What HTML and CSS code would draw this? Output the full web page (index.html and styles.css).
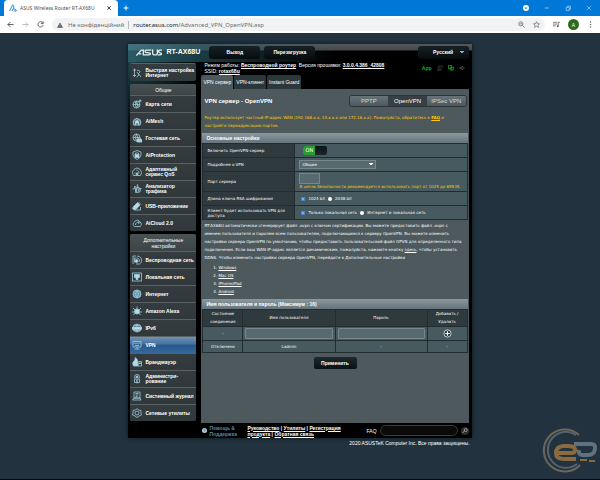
FILE: index.html
```html
<!DOCTYPE html>
<html lang="ru">
<head>
  <meta charset="UTF-8" />
  <meta name="viewport" content="width=device-width, initial-scale=1.0"/>
  <title>ASUS Wireless Router RT-AX68U</title>
  <link rel="stylesheet" href="styles.css">
</head>
<body>
  <header class="browser">
    <div class="tab-strip">
      <div class="browser-tab">
        <svg class="favicon" viewBox="0 0 16 16"><path d="M1 14L7.500 1.500L10 6L6 14M9 10H12L15 14H10" fill="none" stroke="#2490dc" stroke-width="2"/></svg>
        <span class="tab-name">ASUS Wireless Router RT-AX68U</span>
        <button class="plain-btn" aria-label="Close tab"><svg viewBox="0 0 10 10"><path d="M2 2L8 8M8 2L2 8" stroke="#444" stroke-width="1.600"/></svg></button>
      </div>
      <button class="plain-btn new-tab" aria-label="New tab"><svg viewBox="0 0 10 10"><path d="M5 1V9M1 5H9" stroke="#fff" stroke-width="1.600"/></svg></button>
      <div class="window-btns">
        <button class="plain-btn" aria-label="Account"><svg viewBox="0 0 10 10"><circle cx="5" cy="5" r="5" fill="#fff"/><path d="M2.500 4H7.500L5 7Z" fill="#0078d7"/></svg></button>
        <button class="plain-btn" aria-label="Minimize"><svg viewBox="0 0 10 10"><path d="M1 5H8" stroke="#cfe6fa"/></svg></button>
        <button class="plain-btn" aria-label="Restore"><svg viewBox="0 0 10 10"><path d="M2 4H7V9H2ZM4 4V2H9V7H7" fill="none" stroke="#cfe6fa"/></svg></button>
        <button class="plain-btn" aria-label="Close"><svg viewBox="0 0 10 10"><path d="M2 2L8 8M8 2L2 8" stroke="#cfe6fa"/></svg></button>
      </div>
    </div>
    <div class="toolbar">
      <button class="plain-btn" aria-label="Back"><svg viewBox="0 0 16 16"><path d="M15 8H2M8 2L2 8L8 14" fill="none" stroke="#4a4d51" stroke-width="2"/></svg></button>
      <button class="plain-btn" aria-label="Forward"><svg viewBox="0 0 16 16"><path d="M1 8H14M8 2L14 8L8 14" fill="none" stroke="#b5b8bb" stroke-width="2"/></svg></button>
      <button class="plain-btn" aria-label="Reload"><svg viewBox="0 0 16 16"><path d="M13 4A6 6 0 1 0 14 9.500M14 1V6H9" fill="none" stroke="#4a4d51" stroke-width="2"/></svg></button>
      <div class="address">
        <svg class="warn" viewBox="0 0 16 16"><path d="M8 1L16 15H0Z" fill="#54575b"/><path d="M8 6V10M8 11.500V13.500" stroke="#f1f3f4" stroke-width="1.500"/></svg>
        <span class="insecure">Не конфіденційний</span>
        <span class="url"><b>router.asus.com</b>/Advanced_VPN_OpenVPN.asp</span>
        <svg class="addr-icon" viewBox="0 0 16 16"><g fill="none" stroke="#5f6368" stroke-width="1.700"><circle cx="6.500" cy="6.500" r="4.700"/><path d="M10 10L15 15M4 6.500H9"/></g></svg>
        <svg class="addr-icon" viewBox="0 0 16 16"><path d="M8 1.500L10 6L15 6.500L11.200 9.700L12.400 14.500L8 12L3.600 14.500L4.800 9.700L1 6.500L6 6Z" fill="none" stroke="#5f6368" stroke-width="1.500"/></svg>
      </div>
      <button class="plain-btn" aria-label="Media"><svg viewBox="0 0 16 16"><path d="M0 3H10M0 7H10M0 11H6M12 12V3H16" fill="none" stroke="#5f6368" stroke-width="1.800"/><circle cx="10.500" cy="12" r="2.200" fill="#5f6368"/></svg></button>
      <button class="avatar">A</button>
      <button class="plain-btn" aria-label="Menu"><svg viewBox="0 0 16 16"><g fill="#5f6368"><circle cx="8" cy="2.500" r="1.700"/><circle cx="8" cy="8" r="1.700"/><circle cx="8" cy="13.500" r="1.700"/></g></svg></button>
    </div>
  </header>

  <main class="page">
    <div class="router">
      <div class="top-bar">
        <svg class="logo" viewBox="0 0 78 20" role="img" aria-label="ASUS"><g fill="none" stroke="#e3eef2" stroke-width="4"><path d="M1 19L16 3H22V19M9 14H16"/><path d="M46 3H31Q27 3 27 6Q27 9 31 10L40 11Q44 12 43 15Q42 17 39 17H24"/><path d="M50 1V13Q50 17 54 17H60Q64 17 64 13V1"/><path d="M78 3H71Q67 3 67 6Q67 9 71 10L73 11Q77 12 76 15Q75 17 72 17H65"/></g></svg>
        <span class="model">RT-AX68U</span>
        <button class="top-btn">Выход</button>
        <button class="top-btn">Перезагрузка</button>
        <select class="lang" aria-label="Язык"><option>Русский</option></select>
      </div>

      <div class="columns">
        <nav class="side">
          <div class="menu-box">
            <a href="#" class="item quick"><svg viewBox="0 0 20 20"><path d="M2 4H8M5 1V18M2 15H8M10 5A4 4 0 0 1 16 8L13 11L18 18M10 8L14 14L9 18"/></svg><span>Быстрая настройка Интернет</span></a>
          </div>
          <div class="menu-box">
            <h2>Общие</h2>
            <a href="#" class="item"><svg viewBox="0 0 20 20"><circle cx="9" cy="11" r="7"/><path d="M2 11H16M9 4Q4 11 9 18M9 4Q14 11 9 18M5 5L15 16M13 6L18 2"/><circle cx="16" cy="4" r="2"/></svg><span>Карта сети</span></a>
            <a href="#" class="item"><svg viewBox="0 0 20 20"><path d="M2 13A8 8 0 1 1 18 13M10 5L17 11V18H3V11Z"/><path class="solid" d="M6 11L10 8L14 11V18H12V14H8V18H6Z"/></svg><span>AiMesh</span></a>
            <a href="#" class="item"><svg viewBox="0 0 20 20"><circle cx="9" cy="9" r="7"/><path d="M2 9H16M9 2Q4 9 9 16M9 2Q14 9 9 16"/><path class="solid" d="M10 18V14L13 11L16 14V18ZM15 18V13L17 11L20 14V18Z"/></svg><span>Гостевая сеть</span></a>
            <a href="#" class="item"><svg viewBox="0 0 20 20"><path d="M10 1L18 4V10Q17 16 10 19Q3 16 2 10V4Z"/><rect class="solid" x="6" y="9" width="8" height="6"/><path d="M7 9V6H13V9"/></svg><span>AiProtection</span></a>
            <a href="#" class="item"><svg viewBox="0 0 20 20"><path d="M3 17A9 9 0 1 1 17 17ZM5 12H7M10 5V8M15 12H13M10 14L14 8"/><circle class="solid" cx="10" cy="14" r="2"/></svg><span>Адаптивный сервис QoS</span></a>
            <a href="#" class="item"><svg viewBox="0 0 20 20"><path d="M1 10H4L6 4L8 18L11 1L13 15L15 9H19"/><circle cx="12" cy="12" r="5"/></svg><span>Анализатор<br>трафика</span></a>
            <a href="#" class="item"><svg viewBox="0 0 20 20"><path class="solid" d="M3 11L11 3L16 8L8 17Q4 19 1 15Z"/><path d="M13 2L18 7M5 18H17V12"/></svg><span>USB-приложение</span></a>
            <a href="#" class="item"><svg viewBox="0 0 20 20"><path d="M5 17A5 5 0 0 1 5 8A6 6 0 0 1 16 8A5 5 0 0 1 16 17ZM7 14A5 5 0 0 1 14 9M12 7L15 9L13 12"/></svg><span>AiCloud 2.0</span></a>
          </div>
          <div class="menu-box">
            <h2>Дополнительные настройки</h2>
            <a href="#" class="item"><svg viewBox="0 0 20 20"><path d="M2 18V2H8M5 15V6H9M10 2A9 9 0 0 1 17 17M10 6A5 5 0 0 1 14 14M8 18H16"/><circle class="solid" cx="9" cy="12" r="3"/></svg><span>Беспроводная сеть</span></a>
            <a href="#" class="item"><svg viewBox="0 0 20 20"><rect x="1" y="2" width="18" height="16"/><path class="solid" d="M5 5H15V11H12V15H8V11H5Z"/></svg><span>Локальная сеть</span></a>
            <a href="#" class="item"><svg viewBox="0 0 20 20"><circle class="tint" cx="10" cy="10" r="8"/><path d="M2 10H18M3 6H17M3 14H17M10 2Q4 10 10 18M10 2Q16 10 10 18"/></svg><span>Интернет</span></a>
            <a href="#" class="item"><svg viewBox="0 0 20 20"><circle class="solid" cx="10" cy="11" r="5"/><path d="M10 6V1M6 8L2 4M14 8L18 4M5 12H0M15 12H20M6 14L3 18M14 14L17 18"/></svg><span>Amazon Alexa</span></a>
            <a href="#" class="item"><svg viewBox="0 0 20 20"><circle cx="10" cy="10" r="8"/><path d="M10 2Q4 10 10 18M10 2Q16 10 10 18M3 5H17M3 15H17"/><path class="solid" d="M1 8H19V13H1Z"/></svg><span>IPv6</span></a>
            <a href="#" class="item active"><svg viewBox="0 0 20 20"><path d="M2 3H18V14H2ZM10 14V18M5 18H15M5 7H7M9 7H11M13 7H15M6 11H14"/></svg><span>VPN</span></a>
            <a href="#" class="item"><svg viewBox="0 0 20 20"><path class="solid" d="M7 1Q14 7 12 18H3Q-1 11 5 7Q6 5 7 1Z"/><path d="M13 9H19V18H12M13 13H19M16 9V13"/></svg><span>Брандмауэр</span></a>
            <a href="#" class="item"><svg viewBox="0 0 20 20"><circle cx="10" cy="6" r="5"/><circle class="solid" cx="10" cy="6" r="2"/><path d="M5 10V17H15V10M10 12V19M8 14H12"/></svg><span>Администри-<br>рование</span></a>
            <a href="#" class="item"><svg viewBox="0 0 20 20"><path d="M4 2H16V14H4ZM7 5H13M7 8H13M7 11H11M1 18H18L16 14H4Z"/></svg><span>Системный журнал</span></a>
            <a href="#" class="item"><svg viewBox="0 0 20 20"><path d="M10 1L13 4L18 5V10L19 14L14 16L10 19L6 16L1 14L2 10V5L7 4Z"/><circle cx="10" cy="10" r="4"/></svg><span>Сетевые утилиты</span></a>
          </div>
        </nav>

        <div class="main">
          <div class="info">
            <div class="info-text">
              <div>Режим работы: <a href="#">Беспроводной роутер</a>&nbsp; Версия прошивки: <a href="#">3.0.0.4.386_42808</a></div>
              <div>SSID: <a href="#">rotax68u</a></div>
            </div>
            <div class="status">
              <a href="#" class="app">App</a>
              <svg viewBox="0 0 16 16"><g fill="none" stroke="#3a4043" stroke-width="2"><circle cx="6" cy="5" r="3"/><path d="M1 14V11H11V14ZM10 2H14V9"/></g></svg>
              <svg viewBox="0 0 16 16"><path d="M1 1H10V10H1ZM6 6H15V13H6ZM8 16H13" fill="none" stroke="#1fae35" stroke-width="2"/></svg>
              <svg viewBox="0 0 16 16"><path d="M0 8H15M5 8L8 4H11M5 8L8 12H11" fill="none" stroke="#566064" stroke-width="2"/></svg>
            </div>
          </div>
          <div class="tabs">
            <button class="tab current">VPN сервер</button>
            <button class="tab">VPN-клиент</button>
            <button class="tab">Instant Guard</button>
          </div>

          <section class="panel">
            <div class="panel-head">
              <h1>VPN сервер - OpenVPN</h1>
              <div class="switcher">
                <button>PPTP</button>
                <button class="on">OpenVPN</button>
                <button>IPSec VPN</button>
              </div>
            </div>
            <p class="warning">Роутер использует частный IP-адрес WAN (192.168.x.x, 10.x.x.x или 172.16.x.x). Пожалуйста, обратитесь к <a href="#">FAQ</a> и<br>настройте переадресацию портов.</p>

            <table class="settings">
              <caption>Основные настройки</caption>
              <tr>
                <th>Включить OpenVPN-сервер</th>
                <td><button class="toggle" aria-label="Включить OpenVPN-сервер"><span>ON</span></button></td>
              </tr>
              <tr>
                <th><label for="details">Подробнее о VPN</label></th>
                <td><select id="details" class="details"><option>Общие</option></select></td>
              </tr>
              <tr class="tall">
                <th><label for="port">Порт сервера</label></th>
                <td><input type="text" id="port" class="port"><div class="hint">В целях безопасности рекомендуется использовать порт от 1025 до 65535.</div></td>
              </tr>
              <tr>
                <th>Длина ключа RSA шифрования</th>
                <td><div class="radios">
                  <label><input type="radio" name="rsa" checked>1024 bit</label>
                  <label><input type="radio" name="rsa">2048 bit</label>
                </div></td>
              </tr>
              <tr>
                <th>Клиент будет использовать VPN для доступа</th>
                <td><div class="radios">
                  <label><input type="radio" name="access" checked>Только локальная сеть</label>
                  <label><input type="radio" name="access">Интернет и локальная сеть</label>
                </div></td>
              </tr>
            </table>

            <div class="about">
              <p>RT-AX68U автоматически сгенерирует файл .ovpn с ключом сертификации. Вы можете предоставить файл .ovpn с<br>именем пользователя и паролем всем пользователям, подключающимся к серверу OpenVPN. Вы можете изменить<br>настройки сервера OpenVPN по умолчанию, чтобы предоставить пользовательский файл OPVN для определенного типа<br>подключения. Если ваш WAN IP-адрес является динамическим, пожалуйста, нажмите кнопку <a href="#">здесь</a>, чтобы установить<br>DDNS. Чтобы изменить настройки сервера OpenVPN, перейдите в Дополнительные настройки</p>
              <ol>
                <li><a href="#">Windows</a></li>
                <li><a href="#">Mac OS</a></li>
                <li><a href="#">iPhone/iPad</a></li>
                <li><a href="#">Android</a></li>
              </ol>
            </div>

            <table class="users">
              <caption>Имя пользователя и пароль (Максимум : 16)</caption>
              <tr>
                <th class="state">Состояние соединения</th>
                <th>Имя пользователя</th>
                <th>Пароль</th>
                <th class="state">Добавить /<br>Удалить</th>
              </tr>
              <tr class="entry">
                <td>-</td>
                <td><input type="text" aria-label="Имя пользователя"></td>
                <td><input type="text" aria-label="Пароль"></td>
                <td><button class="add" aria-label="Добавить"><svg viewBox="0 0 20 20"><circle cx="10" cy="10" r="8" fill="#29363a" stroke="#d5dcde" stroke-width="2"/><path d="M10 5V15M5 10H15" stroke="#fff" stroke-width="2.500"/></svg></button></td>
              </tr>
              <tr>
                <td>Отключено</td>
                <td>Ladmin</td>
                <td>-</td>
                <td>-</td>
              </tr>
            </table>
            <button class="apply">Применить</button>
          </section>
        </div>
      </div>

      <footer class="foot">
        <div class="help">
          <svg viewBox="0 0 10 10"><circle cx="5" cy="5" r="5" fill="#b8d3df"/><path d="M3 4Q5 1 7 4L5 6M5 7V8.500" fill="none" stroke="#24404e" stroke-width="1.300"/></svg>
          <a href="#">Помощь &amp; Поддержка</a>
        </div>
        <div class="foot-links"><a href="#">Руководство</a> | <a href="#">Утилиты</a> | <a href="#">Регистрация продукта</a> | <a href="#">Обратная связь</a></div>
        <label for="faq">FAQ</label>
        <input type="text" id="faq">
        <button class="find" aria-label="Поиск"><svg viewBox="0 0 16 16"><circle cx="9.500" cy="6" r="3" fill="none" stroke="#aaa" stroke-width="1.600"/><path d="M7 8L3 12" stroke="#aaa" stroke-width="2"/></svg></button>
      </footer>
    </div>
    <div class="copyright">2020 ASUSTeK Computer Inc. Все права защищены.</div>
  </main>

  <svg class="watermark" viewBox="0 0 56 48" role="img" aria-label="ec">
    <g fill="none">
      <path d="M37 9A21 21 0 1 0 38 39" stroke="#6b655c" stroke-width="2"/>
      <path d="M34 9A18 18 0 1 0 35 38" stroke="#54636d" stroke-width="2"/>
      <path d="M14 27H29Q34 27 33 23Q32 20 26 20H21Q14 21 14 27Q14 33 22 33H34" stroke="#8a6a3f" stroke-width="4"/>
      <path d="M32 18H49Q54 18 53 23Q52 29 46 29H41Q36 29 37 24" stroke="#60727d" stroke-width="4"/>
      <path d="M38 34H45M47 35H53" stroke="#8a6a3f" stroke-width="2"/>
    </g>
  </svg>
  <div class="taskbar"></div>
</body>
</html>
```
FILE: styles.css
```css
* {
  box-sizing: border-box;
}

body {
  margin: 0;
  min-height: 100vh;
  display: flex;
  flex-direction: column;
  background: #22333f;
  color: #fff;
  font-family: "Liberation Sans", Arial, sans-serif;
  font-size: 5px;
  line-height: 8px;
}

button, input, select {
  font: inherit;
  color: inherit;
  margin: 0;
  padding: 0;
  border: none;
}

svg {
  display: block;
}

a {
  color: inherit;
}

h1, h2, p, ol {
  margin: 0;
}

/* browser window */
.tab-strip {
  display: flex;
  align-items: center;
  height: 16px;
  padding-left: 4px;
  background: #0078d7;
}

.browser-tab {
  display: flex;
  align-items: center;
  gap: 3px;
  width: 114px;
  height: 16px;
  padding: 0 6px 0 5px;
  background: #fff;
  border-radius: 4px 4px 0 0;
  color: #4c5055;
  font-family: "Noto Sans", sans-serif;
  font-size: 5px;
}

.favicon {
  width: 8px;
  height: 8px;
  flex: none;
}

.tab-name {
  flex: 1;
  overflow: hidden;
  white-space: nowrap;
}

.plain-btn {
  flex: none;
  background: none;
}

.plain-btn svg {
  width: 6px;
  height: 6px;
}

.new-tab {
  margin-left: 5px;
}

.window-btns {
  display: flex;
  align-items: center;
  gap: 15px;
  margin-left: auto;
  padding-right: 8px;
}

.toolbar {
  display: flex;
  align-items: center;
  gap: 8px;
  height: 17px;
  padding: 0 6px 0 7px;
  background: #fff;
}

.toolbar .plain-btn svg {
  width: 7px;
  height: 7px;
}

.address {
  flex: 1;
  display: flex;
  align-items: center;
  height: 13px;
  padding: 0 5px;
  background: #f1f3f4;
  border-radius: 7px;
  color: #6a6e72;
  font-family: "Noto Sans", sans-serif;
  font-size: 6px;
}

.warn {
  width: 6px;
  height: 6px;
  margin-right: 5px;
}

.insecure {
  padding-right: 4px;
  border-right: 1px solid #bbb;
}

.url {
  flex: 1;
  padding-left: 4px;
}

.url b {
  color: #222;
  font-weight: normal;
}

.addr-icon {
  width: 7px;
  height: 7px;
  margin-left: 8px;
}

.avatar {
  width: 11px;
  height: 11px;
  border-radius: 50%;
  background: #2f6b1f;
  text-align: center;
}

/* router frame */
.page {
  flex: 1;
  padding-top: 11px;
}

.router {
  width: 57.2%;
  min-width: 343px;
  margin: 0 auto;
  background: #000;
  box-shadow: 0 0 4px #0b141a;
}

.top-bar {
  display: flex;
  align-items: center;
  gap: 4px;
  height: 18px;
  padding: 0 3px 2px 8px;
  background: linear-gradient(90deg, rgba(62,128,143,.7) 0%, rgba(40,90,103,.7) 18%, rgba(0,0,0,0) 60%), linear-gradient(#55595b 0, #44484a 6px, #000 7px);
}

.logo {
  width: 26px;
  height: 7px;
}

.model {
  width: 39px;
  font-size: 7px;
  font-weight: bold;
}

.top-btn, .lang {
  height: 13px;
  width: 51px;
  border-radius: 3px;
  background: linear-gradient(#162226, #070b0d);
  font-weight: bold;
  text-align: center;
}

.lang, .details {
  appearance: none;
  background-repeat: no-repeat;
}

.lang {
  margin-left: auto;
  background-image: linear-gradient(to bottom right, #9cabb0 50%, transparent 50%), linear-gradient(to bottom left, #9cabb0 50%, transparent 50%), linear-gradient(#162226, #070b0d);
  background-size: 2px 3px, 2px 3px, 100% 100%;
  background-position: right 5px center, right 7px center, 0 0;
}

.columns {
  display: flex;
  gap: 5px;
  padding: 0 3px 0 2px;
  background: radial-gradient(ellipse at 4px 0, #17424d 0, transparent 70px);
}

/* left menu */
.side {
  width: 66px;
  flex: none;
  display: flex;
  flex-direction: column;
  gap: 3px;
  padding: 1px 0 2px;
}

.menu-box {
  background: #363e41;
  border-radius: 2px;
  overflow: hidden;
}

.menu-box h2 {
  padding: 3px 8px 2px;
  background: linear-gradient(#4a5153, #3c4447);
  font-size: 5px;
  font-weight: normal;
  line-height: 6px;
  text-align: center;
}

.item {
  display: flex;
  align-items: center;
  gap: 3px;
  height: 17px;
  padding: 0 1px 0 2px;
  border-top: 1px solid #596163;
  background: linear-gradient(#343c3f, #30383b);
  font-size: 5px;
  font-weight: bold;
  line-height: 5px;
  text-decoration: none;
}

.quick {
  height: 18px;
}

.item svg {
  width: 10px;
  height: 10px;
  flex: none;
  fill: none;
  stroke: #9fcadb;
  stroke-width: 1.6;
}

.item .solid {
  fill: #b5dbe9;
}

.item .tint {
  fill: #467790;
}

.active {
  background: linear-gradient(#6e93b4 0, #456f9d 45%, #27588d 50%, #36689c);
}

/* right part */
.main {
  flex: 1;
  min-width: 0;
  display: flex;
  flex-direction: column;
}

.info {
  display: flex;
  justify-content: space-between;
  height: 13px;
  padding-left: 3px;
  line-height: 6px;
}

.info-text {
  white-space: nowrap;
}

.info-text a {
  font-weight: bold;
}

.status {
  display: flex;
  align-items: center;
  gap: 5px;
  padding: 0 4px 2px 0;
}

.status svg {
  width: 6px;
  height: 6px;
}

.app {
  color: #1fae35;
  font-weight: bold;
  text-decoration: none;
}

.tabs {
  display: flex;
  gap: 1px;
}

.tab {
  height: 14px;
  padding: 0 2px;
  background: #2b373b;
  border-radius: 2px 2px 0 0;
}

.tab.current {
  background: #4d595d;
}

.panel {
  flex: 1;
  padding: 6px 1px;
  background: #4d595d;
  font-family: "DejaVu Sans", Verdana, sans-serif;
  font-size: 4px;
}

.panel-head {
  display: flex;
  align-items: center;
  justify-content: space-between;
  padding: 0 1px 0 2px;
}

.panel-head h1 {
  font-family: "Liberation Sans", Arial, sans-serif;
  font-size: 6px;
}

.switcher {
  display: flex;
  width: 118px;
  border: 1px solid #2b3538;
  border-radius: 3px;
  overflow: hidden;
  font-family: "Liberation Sans", Arial, sans-serif;
}

.switcher button {
  flex: 1;
  height: 10px;
  background: linear-gradient(#68747a, #4c585d);
  color: #d0d6d8;
  font-size: 6px;
  line-height: 10px;
}

.switcher .on {
  background: #353f44;
  color: #fff;
}

.warning {
  padding: 7px 2px 3px;
  color: #fc0;
  white-space: nowrap;
}

.warning a {
  font-weight: bold;
}

table {
  width: 100%;
  border-collapse: collapse;
  table-layout: fixed;
}

caption {
  height: 10px;
  padding: 0 4px;
  background: linear-gradient(#8b989c, #66757b);
  font-family: "Liberation Sans", Arial, sans-serif;
  font-size: 5px;
  font-weight: bold;
  line-height: 10px;
  text-align: left;
}

th, td {
  padding: 0 4px;
  border: 1px solid #222d32;
  background: #475a5f;
}

th {
  background: #2f3a3e;
  font-weight: normal;
}

.settings th {
  width: 92px;
  line-height: 5px;
  text-align: left;
}

.settings tr {
  height: 14px;
}

.settings .tall {
  height: 20px;
}

.toggle {
  display: flex;
  width: 24px;
  height: 9px;
  margin-left: 4px;
  background: linear-gradient(#0c1416, #1c282b);
  border-radius: 2px;
  overflow: hidden;
  line-height: 9px;
}

.toggle span {
  width: 12px;
  background: #279d32;
  font-size: 5px;
}

.details {
  display: block;
  width: 77px;
  height: 9px;
  padding: 0 2px;
  border: 1px solid #79868a;
  background-color: #576a70;
  background-image: linear-gradient(to bottom right, #fff 50%, transparent 50%), linear-gradient(to bottom left, #fff 50%, transparent 50%);
  background-size: 2px 3px;
  background-position: right 2px center, right 4px center;
  line-height: 7px;
}

.port {
  display: block;
  width: 21px;
  height: 11px;
  border: 1px solid #79868a;
  background: #576a70;
}

.hint {
  color: #fc0;
  line-height: 6px;
}

.radios {
  display: flex;
  gap: 3px;
  padding-left: 2px;
}

.radios label {
  display: flex;
  align-items: center;
  gap: 3px;
}

.radios input {
  appearance: none;
  width: 4px;
  height: 4px;
  border-radius: 50%;
  background: #fff;
}

.radios input:checked {
  outline: 1px solid #2585e8;
  outline-offset: -1px;
  background: #9cc9f7;
}

.about {
  padding: 2px 2px 3px;
}

.about p {
  white-space: nowrap;
}

.about ol {
  padding: 2px 0 0 14px;
}

.users {
  text-align: center;
}

.users .state {
  width: 40px;
}

.users .entry {
  height: 14px;
}

.users tr {
  height: 12px;
}

.users td, .users th {
  padding: 0 2px;
}

.users input {
  display: block;
  width: 100%;
  height: 11px;
  border: 1px solid #79868a;
  border-radius: 1px;
  background: #576a70;
}

.add {
  display: block;
  margin: 0 auto;
  background: none;
}

.add svg {
  width: 9px;
  height: 9px;
}

.apply {
  display: block;
  width: 43px;
  height: 12px;
  margin: 4px auto;
  border-radius: 2px;
  background: linear-gradient(#1d2a2e, #0b1113);
  font-family: "Liberation Sans", Arial, sans-serif;
  font-size: 5px;
  font-weight: bold;
}

/* footer */
.foot {
  display: flex;
  align-items: center;
  height: 15px;
  padding: 0 3px 0 74px;
  line-height: 6px;
}

.help {
  display: flex;
  align-items: center;
  gap: 2px;
  width: 45px;
  color: #4d86ad;
  font-weight: bold;
}

.help svg {
  width: 5px;
  height: 5px;
  flex: none;
}

.help a {
  width: 28px;
  text-decoration: none;
}

.foot-links {
  width: 96px;
  font-weight: bold;
}

.foot label {
  margin-left: auto;
  padding-right: 3px;
}

.foot input {
  width: 78px;
  height: 11px;
  border: 1px solid #3a3a3a;
  border-radius: 6px;
  background: #0a0a0a;
}

.find {
  width: 8px;
  height: 8px;
  margin-left: 3px;
  border-radius: 50%;
  background: #2e2e2e;
}

.copyright {
  width: 57.2%;
  min-width: 343px;
  margin: 1px auto 0;
  padding-right: 2px;
  text-align: right;
}

.watermark {
  position: absolute;
  right: 2px;
  bottom: 6px;
  width: 56px;
  height: 48px;
}

.taskbar {
  height: 1px;
  background: #05080c;
}
```
